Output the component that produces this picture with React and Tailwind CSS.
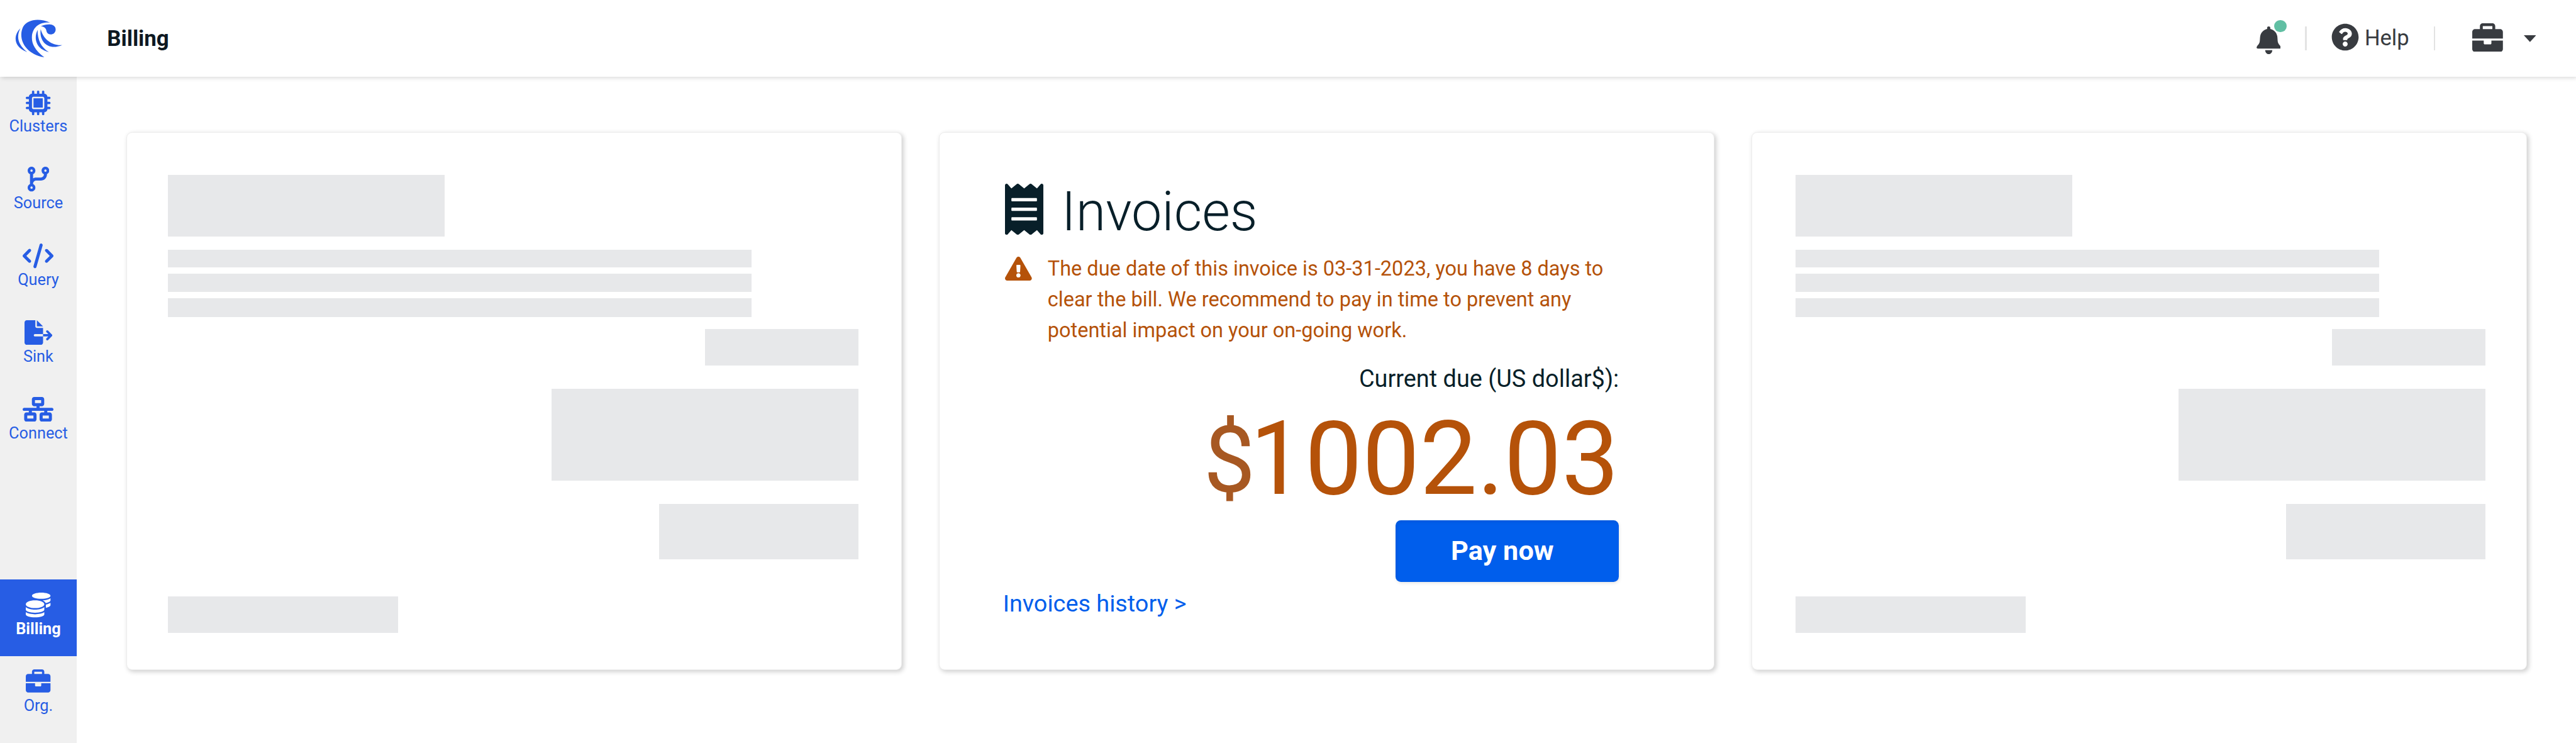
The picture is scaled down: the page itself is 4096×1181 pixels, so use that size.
import React from "react";
import {
  FaReceipt,
  FaExclamationTriangle,
  FaQuestionCircle,
  FaCoins,
} from "react-icons/fa";
import {
  FaMicrochip,
  FaCodeBranch,
  FaCode,
  FaNetworkWired,
} from "react-icons/fa6";

function Logo() {
  return (
    <svg viewBox="100 135 340 270" className="h-[61px] w-[76.8px] fill-[#275de4]">
      <path d="M142 197C95 240 85 325 190 364C112 305 118 240 142 197Z" />
      <path d="M352 157C270 122 190 135 160 188C125 262 165 375 310 401C240 350 220 300 223 255C226 200 265 150 352 157Z" />
      <path d="M286 183C305 172 335 168 355 170C378 172 390 188 390 205C390 226 375 240 357 240C335 240 326 225 324 210C320 195 305 184 286 183Z" />
      <path d="M263 208C232 270 255 345 342 364C285 330 262 275 263 208Z" />
      <path d="M285 204C272 275 325 360 437 315C370 322 305 280 285 204Z" />
    </svg>
  );
}

function Briefcase({ className }) {
  return (
    <svg viewBox="0 0 512 480" fill="currentColor" className={className}>
      <path d="M320 336c0 8.8-7.2 16-16 16h-96c-8.8 0-16-7.2-16-16v-48H0v144c0 25.6 22.4 48 48 48h416c25.6 0 48-22.4 48-48V288H320v48zM464 96h-80V48c0-26-22.4-48-48-48H176c-25.6 0-48 22.4-48 48v48H48C22.4 96 0 118.4 0 144v112h512V144c0-25.6-22.4-48-48-48zm-128 0H176V48h160v48z" />
    </svg>
  );
}

function FileExport({ className }) {
  return (
    <svg viewBox="0 0 576 512" fill="currentColor" className={className}>
      <path d="M192 312c0-13.2 10.8-24 24-24h168V160H256c-17.67 0-32-14.33-32-32V0H48C21.49 0 0 21.49 0 48v416c0 26.5 21.49 48 48 48h288c26.51 0 48-21.49 48-48V336H216c-13.2 0-24-10.8-24-24zM256 0v128h128L256 0zM568.1 295l-80-80c-9.375-9.375-24.56-9.375-33.94 0s-9.375 24.56 0 33.94L494.1 288H384v48h110.1l-39.03 39.03C450.3 379.7 448 385.8 448 392s2.344 12.28 7.031 16.97c9.375 9.375 24.56 9.375 33.94 0l80-80C578.3 319.6 578.3 304.4 568.1 295z" />
    </svg>
  );
}

function Bell({ className }) {
  return (
    <svg viewBox="0 0 57.5 65.5" fill="currentColor" className={className}>
      <path d="M25 3.5C25 1 26.5 0 28.7 0S32.4 1 32.4 3.5V5.8C42 8.3 47.5 15 48.8 23C49.6 28 49.3 33 50.2 37C51.2 41 54 43.5 56 46.2C58.3 49.5 57.3 52 54.5 52H3C0.2 52-0.8 49.5 1.5 46.2C3.5 43.5 6.3 41 7.3 37C8.2 33 7.9 28 8.7 23C10 15 15.5 8.3 25 5.8Z" />
      <path d="M20.3 56H37.2C36.7 61.5 33.5 65.4 28.7 65.4S20.8 61.5 20.3 56Z" />
    </svg>
  );
}

function Header() {
  return (
    <header className="relative z-10 flex h-[122px] shrink-0 items-start bg-white pr-[63.7px] pl-[22.6px] shadow-[2.4px_2.4px_7px_rgba(0,0,0,0.17)]">
      <div className="mt-[30.5px] w-[147.7px]">
        <Logo />
      </div>
      <h1 className="mt-[37.3px] text-[34.8px] leading-[48px] font-bold text-[#0d1821]">
        Billing
      </h1>
      <div className="ml-auto flex items-start text-[#383b40]">
        <div className="relative mt-[42px] mr-[38.6px]">
          <Bell className="h-[44.3px] w-[38.9px]" />
          <span className="absolute -top-[10.2px] -right-[9.4px] size-[19.5px] rounded-full bg-[#61bfa3]" />
        </div>
        <div className="mt-[42px] mr-[39px] h-[38px] w-[2.7px] bg-[#e3e3e3]" />
        <FaQuestionCircle className="mt-[36.8px] mr-[9.2px] size-[44px]" />
        <span className="mt-[36px] mr-[39.6px] text-[34.5px] leading-[48px]">Help</span>
        <div className="mt-[42px] mr-[59.6px] h-[38px] w-[1.4px] bg-[#e3e3e3]" />
        <Briefcase className="mt-[36.6px] mr-[32.8px] h-[45.7px] w-[48.8px]" />
        <svg viewBox="0 0 29 16" className="mt-[56.2px] h-[10.8px] w-[19.6px] fill-current">
          <path d="M0 0H29L14.5 16Z" />
        </svg>
      </div>
    </header>
  );
}

function NavItem({ icon, label, active }) {
  return (
    <div
      className={
        active
          ? "flex h-[121.9px] flex-col items-center bg-[#275de4] pt-[21.5px] font-bold text-white"
          : "flex h-[121.9px] flex-col items-center pt-[21.5px] text-[#275de4]"
      }
    >
      <div className="flex h-[39.5px] items-start justify-center">{icon}</div>
      <span className="mt-[4.2px] text-[25.3px] leading-[27.1px]">{label}</span>
    </div>
  );
}

function Sidebar() {
  return (
    <nav className="flex w-[121.9px] shrink-0 flex-col justify-between bg-[#f0f0f0] pb-[16.3px]">
      <div>
        <NavItem label="Clusters" icon={<FaMicrochip className="size-[39.3px]" />} />
        <NavItem label="Source" icon={<FaCodeBranch className="h-[39.3px] w-[34.4px]" />} />
        <NavItem label="Query" icon={<FaCode className="h-[39.3px] w-[49px]" />} />
        <NavItem label="Sink" icon={<FileExport className="h-[39.3px] w-[44.2px]" />} />
        <NavItem label="Connect" icon={<FaNetworkWired className="h-[39.3px] w-[49px]" />} />
      </div>
      <div>
        <NavItem active label="Billing" icon={<FaCoins className="size-[39.3px]" />} />
        <NavItem label="Org." icon={<Briefcase className="h-[36.8px] w-[39.3px]" />} />
      </div>
    </nav>
  );
}

function Card({ className, children }) {
  return (
    <section
      className={
        "flex h-[855px] w-[1232.8px] shrink-0 flex-col rounded-[9px] border border-[#ededed] bg-white shadow-[2.4px_2.4px_7px_rgba(0,0,0,0.19)] " +
        className
      }
    >
      {children}
    </section>
  );
}

function SkeletonCard({ className }) {
  return (
    <Card className={"pt-[67px] " + className}>
      <div className="h-[97.5px] w-[439.4px] bg-[#e7e8ea]" />
      <div className="mt-[20.8px] flex flex-col gap-[9.6px]">
        <div className="h-[28.8px] w-[928px] bg-[#e7e8ea]" />
        <div className="h-[29.5px] w-[928px] bg-[#e7e8ea]" />
        <div className="h-[29.5px] w-[928px] bg-[#e7e8ea]" />
      </div>
      <div className="mt-[19.5px] h-[58px] w-[244px] self-end bg-[#e7e8ea]" />
      <div className="mt-[37px] h-[146.3px] w-[488.6px] self-end bg-[#e7e8ea]" />
      <div className="mt-[37px] h-[87.8px] w-[317.5px] self-end bg-[#e7e8ea]" />
      <div className="mt-[58.7px] h-[58px] w-[366px] bg-[#e7e8ea]" />
    </Card>
  );
}

function InvoiceCard() {
  return (
    <Card className="pt-[80.4px] pr-[150.6px] pl-[104px]">
      <div className="flex h-[82px] items-start text-[#081f29]">
        <FaReceipt className="h-[81.3px] w-[61px]" />
        <h2 className="mt-[-3.3px] ml-[28.6px] text-[86.3px] leading-[98px] font-light">Invoices</h2>
      </div>
      <div className="mt-[29.8px] flex items-start text-[#b55209]">
        <FaExclamationTriangle className="mt-[5px] h-[38px] w-[42.7px]" />
        <p className="ml-[25px] text-[32.5px] leading-[48.76px] whitespace-nowrap">
          The due date of this invoice is 03-31-2023, you have 8 days to
          <br />
          clear the bill. We recommend to pay in time to prevent any
          <br />
          potential impact on your on-going work.
        </p>
      </div>
      <div className="mt-[28px] self-end text-[37.9px] leading-[48.76px] text-[#081f29]">
        Current due (US dollar$):
      </div>
      <div className="mt-[30.5px] flex h-[146.3px] items-start self-end leading-[146.3px] text-[#b55209]">
        <span className="z-10 mt-[1.6px] mr-[-18px] w-[87.8px] bg-white text-[146.3px] text-[#a75822]">$</span>
        <span className="text-[162.5px]">1002.03</span>
      </div>
      <button className="mt-[24px] h-[97.5px] w-[354.9px] self-end rounded-[8.5px] bg-[#005eec] pr-[16px] text-[43.3px] leading-[97.5px] font-bold text-white shadow-[inset_2px_3px_5px_rgba(0,0,0,0.06),1px_2px_5px_rgba(0,0,0,0.1)]">
        Pay now
      </button>
      <a className="mt-[9.7px] ml-[-3.4px] self-start text-[37.8px] leading-[48.76px] text-[#005eec]">
        Invoices history &gt;
      </a>
    </Card>
  );
}

export default function App() {
  return (
    <div className="flex h-[1181px] w-[4096px] flex-col overflow-hidden bg-white font-['Roboto',sans-serif]">
      <Header />
      <div className="flex min-h-0 flex-1">
        <Sidebar />
        <main className="flex flex-1 gap-[59.4px] pt-[88.3px] pl-[79px]">
          <SkeletonCard className="pr-[67.6px] pl-[65.6px]" />
          <InvoiceCard />
          <SkeletonCard className="pr-[64.6px] pl-[69px]" />
        </main>
      </div>
    </div>
  );
}
